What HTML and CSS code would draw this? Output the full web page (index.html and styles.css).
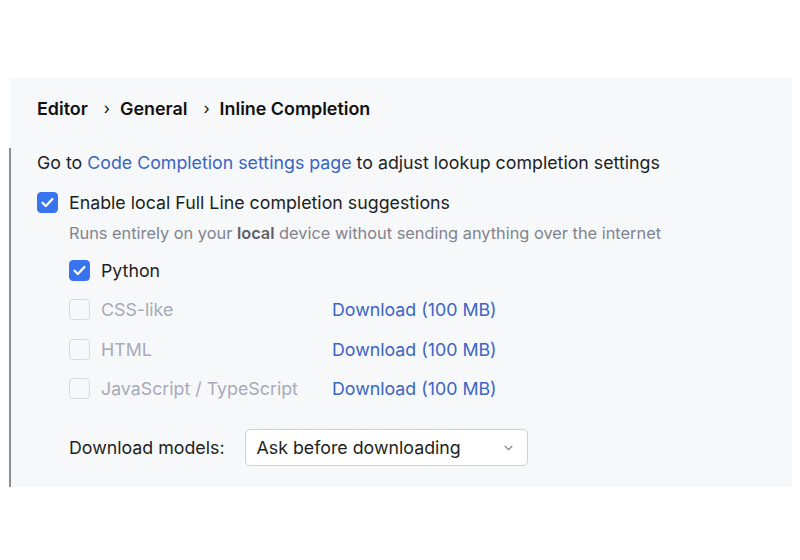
FILE: index.html
```html
<!DOCTYPE html>
<html lang="en">
<head>
<meta charset="UTF-8" />
<title>Inline Completion</title>
<link rel="stylesheet" href="styles.css">
</head>
<body>
  <!-- Settings panel -->
  <section class="panel">
    <nav class="crumbs">
      <span>Editor</span>
      <span class="sep">›</span>
      <span>General</span>
      <span class="sep">›</span>
      <span>Inline Completion</span>
    </nav>

    <p class="intro">Go to <a href="#">Code Completion settings page</a> to adjust lookup completion settings</p>

    <label class="check">
      <span class="box on"><svg viewBox="0 0 20 20"><path d="M4.8 10.3l3.4 3.4 7-7.4" /></svg></span>
      Enable local Full Line completion suggestions
    </label>
    <p class="hint">Runs entirely on your <b>local</b> device without sending anything over the internet</p>

    <div class="langs">
      <label class="check">
        <span class="box on"><svg viewBox="0 0 20 20"><path d="M4.8 10.3l3.4 3.4 7-7.4" /></svg></span>
        Python
      </label>
      <div class="lang-row">
        <label class="check off"><span class="box"></span>CSS-like</label>
        <a href="#">Download (100 MB)</a>
      </div>
      <div class="lang-row">
        <label class="check off"><span class="box"></span>HTML</label>
        <a href="#">Download (100 MB)</a>
      </div>
      <div class="lang-row">
        <label class="check off"><span class="box"></span>JavaScript / TypeScript</label>
        <a href="#">Download (100 MB)</a>
      </div>
    </div>

    <div class="models">
      <span>Download models:</span>
      <div class="select">
        Ask before downloading
        <svg viewBox="0 0 12 12"><path d="M2.5 4.5l3.5 3.5 3.5-3.5" /></svg>
      </div>
    </div>
  </section>
</body>
</html>
```

FILE: styles.css
```css
* {
  box-sizing: border-box;
}
html, body {
  margin: 0;
  padding: 0;
  background: #ffffff;
  font-family: Inter, 'Noto Sans', sans-serif;
  color: #1e1f22;
}
body {
  padding: 78px 8px 0 10px;
  height: 560px;
}

.panel {
  height: 409px;
  background: #f7f8fa;
  padding: 18px 0 0 27px;
  position: relative;
}
/* dark edge on the left */
.panel::before {
  content: '';
  position: absolute;
  left: -1px;
  top: 70px;
  bottom: 0;
  width: 2px;
  background: #8c8f96;
}

.crumbs {
  display: flex;
  align-items: center;
  font-size: 17.9px;
  font-weight: 600;
  height: 24px;
  color: #111;
}
.crumbs .sep {
  font-weight: 400;
  margin: 0 10px 0 16px;
  font-size: 16px;
}

p {
  margin: 0;
}
a {
  color: #3b64c4;
  text-decoration: none;
}

.intro {
  margin-top: 31px;
  font-size: 17.8px;
  height: 24px;
  line-height: 24px;
}

.check {
  display: flex;
  align-items: center;
  gap: 11px;
  font-size: 17.8px;
  height: 24px;
}
.intro + .check {
  margin-top: 15px;
}
.box {
  width: 21px;
  height: 21px;
  border-radius: 4px;
  border: 1.5px solid #d7dae0;
  background: #f7f8fa;
  display: flex;
  flex: none;
}
.box.on {
  background: #3874f0;
  border-color: #3874f0;
}
.box svg {
  width: 100%;
  height: 100%;
  fill: none;
  stroke: #ffffff;
  stroke-width: 2.4;
  stroke-linecap: round;
  stroke-linejoin: round;
}
.check.off {
  color: #a6abb8;
  width: 263px;
}

.hint {
  margin: 7px 0 0 32px;
  font-size: 16.35px;
  color: #80848e;
  height: 24px;
  line-height: 24px;
}
.hint b {
  font-weight: 600;
  color: #5d6068;
}

.langs {
  margin: 13px 0 0 32px;
  display: flex;
  flex-direction: column;
  gap: 15.5px;
}
.lang-row {
  display: flex;
  align-items: center;
  font-size: 17.8px;
}

.models {
  margin: 28px 0 0 32px;
  display: flex;
  align-items: center;
  gap: 20px;
  font-size: 17.8px;
}
.select {
  width: 283px;
  height: 37px;
  background: #ffffff;
  border: 1px solid #cdd0d8;
  border-radius: 5px;
  display: flex;
  align-items: center;
  justify-content: space-between;
  padding: 0 12px 0 11px;
}
.select svg {
  width: 13px;
  height: 13px;
  fill: none;
  stroke: #7d818a;
  stroke-width: 1.2;
}
```
